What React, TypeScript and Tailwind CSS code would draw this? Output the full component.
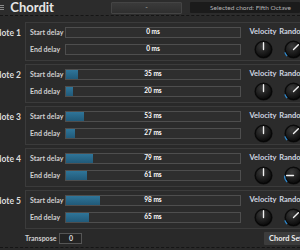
import React from 'react';

type Note = {
  id: number;
  start: number;
  end: number;
  random: number;
};

const notes: Note[] = [
  { id: 1, start: 0, end: 0, random: 45 },
  { id: 2, start: 35, end: 20, random: 45 },
  { id: 3, start: 53, end: 27, random: 45 },
  { id: 4, start: 79, end: 61, random: -90 },
  { id: 5, start: 98, end: 65, random: 45 },
];

const MAX_DELAY = 500;

const Knob = ({ angle, arc }: { angle: number; arc?: boolean }) => {
  const rad = ((angle - 90) * Math.PI) / 180;
  const x2 = 9 + Math.cos(rad) * 6.5;
  const y2 = 9 + Math.sin(rad) * 6.5;
  // blue value arc runs from -135deg to the current angle
  const polar = (a: number, r: number) => {
    const t = ((a - 90) * Math.PI) / 180;
    return [9 + Math.cos(t) * r, 9 + Math.sin(t) * r];
  };
  const [ax, ay] = polar(-135, 8.6);
  const [bx, by] = polar(angle, 8.6);
  const large = angle + 135 > 180 ? 1 : 0;
  return (
    <svg width="19" height="19" viewBox="0 0 18 18">
      <defs>
        <radialGradient id="kg" cx="40%" cy="30%" r="75%">
          <stop offset="0%" stopColor="#3a3a3a" />
          <stop offset="100%" stopColor="#070707" />
        </radialGradient>
      </defs>
      <circle cx="9" cy="9" r="8.6" fill="#111" />
      <circle cx="9" cy="9" r="7.6" fill="url(#kg)" stroke="#000" strokeWidth="0.6" />
      {arc && (
        <path
          d={`M ${ax} ${ay} A 8.6 8.6 0 ${large} 1 ${bx} ${by}`}
          fill="none"
          stroke="#2f86c8"
          strokeWidth="1.3"
          strokeDasharray={angle > 0 ? '4 100' : undefined}
        />
      )}
      <line x1="9" y1="9" x2={x2} y2={y2} stroke="#f2f2f2" strokeWidth="1.3" strokeLinecap="round" />
    </svg>
  );
};

const DelaySlider = ({ value }: { value: number }) => (
  <div className="relative h-[11px] w-[176px] border border-[#4e4e4e] bg-[#2e2e2e]">
    <div
      className="absolute left-0 top-0 h-full bg-gradient-to-b from-[#2f7599] to-[#215a79]"
      style={{ width: `${(value / MAX_DELAY) * 174}px` }}
    />
    <div className="relative flex h-full items-center justify-center text-[6.5px] font-bold leading-none text-white">
      {value} ms
    </div>
  </div>
);

const NoteRow = ({ note }: { note: Note }) => (
  <div className="flex">
    <div className="flex w-[25px] shrink-0 justify-end pr-[4px] pt-[5px]">
      <span className="whitespace-nowrap text-[8.5px] font-bold text-[#dcdcdc]">Note {note.id}</span>
    </div>
    <div className="flex h-[39px] w-[320px] shrink-0 border border-[#3b3b3b] bg-[#2b2b2b] pl-[4px] pt-[4px]">
      <div className="flex flex-col gap-[6px]">
        <div className="flex items-center">
          <span className="w-[35px] text-[7px] font-bold text-[#d0d0d0]">Start delay</span>
          <DelaySlider value={note.start} />
        </div>
        <div className="flex items-center">
          <span className="w-[35px] text-[7px] font-bold text-[#d0d0d0]">End delay</span>
          <DelaySlider value={note.end} />
        </div>
      </div>
      <div className="ml-[8px] flex w-[28px] flex-col items-center">
        <span className="text-[7.5px] font-bold leading-[10px] text-[#cfd6e0]">Velocity</span>
        <div className="mt-[3px]">
          <Knob angle={0} />
        </div>
      </div>
      <div className="ml-[2px] flex w-[28px] flex-col items-center">
        <span className="text-[7.5px] font-bold leading-[10px] text-[#cfd6e0]">Random</span>
        <div className="mt-[3px]">
          <Knob angle={note.random} arc />
        </div>
      </div>
    </div>
  </div>
);

const App = () => {
  return (
    <div
      className="relative h-[250px] w-[300px] overflow-hidden bg-[#292929]"
      style={{ fontFamily: 'Lato, "Open Sans", sans-serif' }}
    >
      {/* Header */}
      <div className="flex h-[16px] items-center border-b border-dashed border-[#151515] bg-[#2c2c2c]">
        <div className="ml-[-1px] flex w-[7px] flex-col gap-[1px]">
          <div className="h-[1px] bg-[#8a8a8a]" />
          <div className="h-[1px] bg-[#8a8a8a]" />
          <div className="h-[1px] bg-[#8a8a8a]" />
        </div>
        <span className="ml-[6px] text-[13px] font-bold leading-none text-[#e6e6e6]">Chordit</span>
        <div className="ml-[57px] flex h-[12px] w-[93px] items-center justify-center rounded-[1px] border border-[#444] bg-gradient-to-b from-[#3a3a3a] to-[#2f2f2f] text-[7px] text-[#aaa]">
          -
        </div>
        <div className="ml-[8px] flex h-[11px] w-[110px] shrink-0 items-center rounded-[1px] bg-[#1b1b1b] pl-[20px] text-[6.5px] text-[#b4b4b4]">
          Selected chord: Fifth Octave
        </div>
      </div>

      {/* Notes */}
      <div className="mt-[6px] flex flex-col gap-[3px]">
        {notes.map((n) => (
          <NoteRow key={n.id} note={n} />
        ))}
      </div>

      {/* Footer */}
      <div className="mt-[3px] flex items-center">
        <span className="ml-[25px] text-[7px] font-bold text-[#d0d0d0]">Transpose</span>
        <div className="ml-[3px] flex h-[11px] w-[23px] items-center justify-center border border-[#555] bg-[#232323] text-[7px] font-bold text-[#ddd]">
          0
        </div>
        <div className="ml-auto mr-[-20px] flex h-[13px] w-[56px] items-center rounded-[1px] bg-[#3c3c3c] pl-[5px] text-[7.5px] font-bold text-[#eee]">
          Chord Setup
        </div>
      </div>
      <div className="absolute bottom-[2px] left-0 w-full border-b border-dashed border-[#151515]" />
    </div>
  );
};

export default App;
